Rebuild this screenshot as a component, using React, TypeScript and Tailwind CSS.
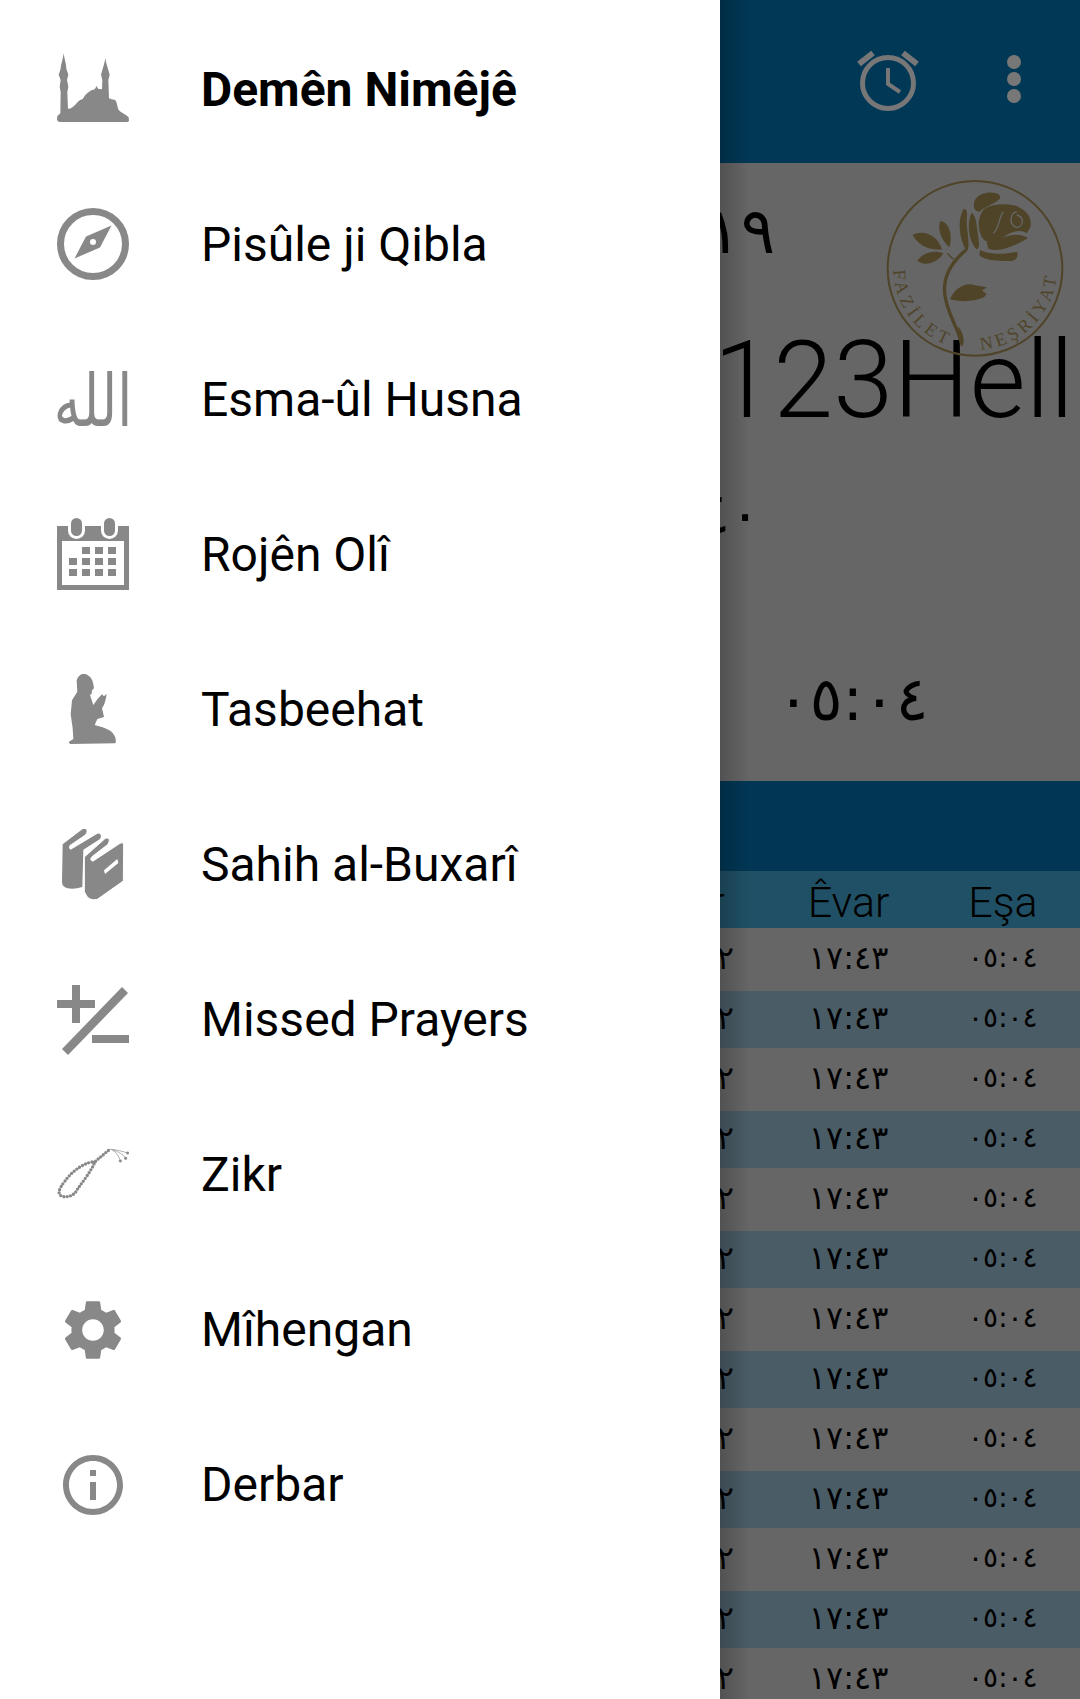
import { MdInfoOutline, MdSettings } from "react-icons/md";

const GRAY = "#888888";

function MosqueIcon() {
  return (
    <svg viewBox="81 72 216 216" className="w-[72px] h-[72px] overflow-visible" fill={GRAY}>
      <path d="M101 70 C104 92 109 102 109 116 L115 134 L111 150 L115 170 L112 186 L114 236 C120 238 128 232 138 222 C144 214 150 210 158 207 C166 192 178 182 194 178 L200 168 L204 176 L216 178 L217 150 L213 134 L217 120 C220 110 224 98 226 85 C228 98 232 110 235 120 L239 134 L235 150 L237 205 L245 208 L256 210 C262 220 262 232 266 240 C276 250 290 254 296 262 L297 272 Q296 276 290 276 L88 276 Q82 276 81 268 L82 258 L91 250 L92 186 L89 170 L92 150 L86 134 L92 116 C93 102 98 92 101 70 Z" />
    </svg>
  );
}

function CompassIcon() {
  return (
    <svg viewBox="0 1 72 72" className="w-[72px] h-[72px] overflow-visible">
      <circle cx="36" cy="36" r="32.5" fill="none" stroke={GRAY} strokeWidth="7" />
      <path d="M54.5 17.5 L43 39.5 L17.5 50.5 L29 28.5 Z" fill={GRAY} />
      <circle cx="36" cy="34" r="3" fill="#ffffff" />
    </svg>
  );
}

function CalendarIcon() {
  const cells = [
    [25, 25], [38, 25], [51, 25],
    [12, 36], [25, 36], [38, 36], [51, 36],
    [12, 47], [25, 47], [38, 47], [51, 47],
  ];
  return (
    <svg viewBox="0 2 72 72" className="w-[72px] h-[72px] overflow-visible">
      <rect x="0" y="9" width="72" height="64" fill={GRAY} />
      <rect x="5" y="24" width="62" height="44" fill="#ffffff" />
      <rect x="11" y="0" width="17" height="22" rx="8.5" fill="#ffffff" />
      <rect x="44" y="0" width="17" height="22" rx="8.5" fill="#ffffff" />
      <rect x="14" y="1" width="11" height="18" rx="5.5" fill={GRAY} />
      <rect x="47" y="1" width="11" height="18" rx="5.5" fill={GRAY} />
      {cells.map(([x, y]) => (
        <rect key={`${x}-${y}`} x={x} y={y + 5} width="8" height="7" fill={GRAY} />
      ))}
    </svg>
  );
}

function PrayerIcon() {
  return (
    <svg viewBox="51 69 216 216" className="w-[72px] h-[72px]" fill={GRAY}>
      <path d="M130 68 C146 70 158 82 160 100 L162 112 L156 118 L155 128 L150 132 L160 162 L172 145 L186 130 L192 136 L200 128 C198 145 194 160 186 172 L192 198 L172 204 L164 222 C185 228 208 234 218 246 C226 256 230 268 226 277 L90 279 L86 273 L100 264 L98 232 L92 190 L96 148 L112 122 L110 88 C114 76 120 70 130 68 Z" />
    </svg>
  );
}

function BooksIcon() {
  return (
    <svg viewBox="51 534 216 216" className="w-[72px] h-[72px]">
      <path
        d="M68 580 L128 534 Q138 530 140 540 Q140 548 134 552 L90 582 Q83 590 92 596 L172 548 Q182 546 183 556 L180 564 L130 596 L127 708 Q100 716 80 711 Q66 706 66 692 Z"
        fill={GRAY}
      />
      <path
        d="M133 618 L196 562 Q208 558 208 570 L204 580 L155 618 Q148 626 158 631 L240 577 Q250 572 251 582 L250 690 L172 745 Q150 750 140 735 L133 722 Z"
        fill={GRAY}
        stroke="#ffffff"
        strokeWidth="3"
      />
      <path d="M192 658 L232 624 L235 636 L195 669 Z" fill="#ffffff" />
    </svg>
  );
}

function PlusMinusIcon() {
  return (
    <svg viewBox="0 0 72 72" className="w-[72px] h-[72px]" fill={GRAY}>
      <path d="M15 1 H23 V16 H38 V24 H23 V39 H15 V24 H0 V16 H15 Z" />
      <path d="M65 3 L71 9 L11 71 L5 65 Z" />
      <rect x="35" y="51" width="37" height="8" />
    </svg>
  );
}

function BeadsIcon() {
  return (
    <svg viewBox="51 24 216 216" className="w-[72px] h-[72px]" fill="none" stroke={GRAY}>
      <path
        d="M165 92 C140 92 100 115 75 150 C55 175 50 192 70 197 C90 199 105 190 112 175 C130 150 155 118 165 92 L208 56"
        strokeWidth="10"
        strokeLinecap="round"
        strokeDasharray="0 10"
      />
      <path d="M208 55 C225 55 245 60 263 66 M215 56 C235 62 250 70 257 82 M218 58 C230 65 238 78 241 90" strokeWidth="2" />
      <circle cx="263" cy="66" r="4" fill={GRAY} />
      <circle cx="257" cy="82" r="4" fill={GRAY} />
      <circle cx="241" cy="90" r="4" fill={GRAY} />
    </svg>
  );
}

function AllahIcon() {
  return (
    <span dir="rtl" className="w-[72px] h-[72px] flex items-center justify-center whitespace-nowrap scale-y-[1.35] translate-y-[2px] font-['DejaVu_Sans',sans-serif] text-[54px] leading-none text-[#888888]">
      الله
    </span>
  );
}

function RoseLogo() {
  const c = "#4f4428";
  return (
    <svg viewBox="0 0 660 600" className="absolute left-[860px] top-[170px] w-[220px] h-[200px]">
      <circle cx="345" cy="295" r="262" fill="none" stroke={c} strokeWidth="6" />
      <path d="M158 195 C190 178 232 195 246 238 C205 242 175 225 158 195 Z" fill={c} />
      <path d="M240 154 C258 150 282 185 268 232 C245 212 232 180 240 154 Z" fill={c} />
      <path d="M172 272 C190 246 225 240 250 250 C235 276 195 292 172 272 Z" fill={c} />
      <path d="M262 250 L280 268" stroke={c} strokeWidth="4" />
      <path d="M318 240 C270 280 242 330 258 392 C268 440 296 480 305 522" fill="none" stroke={c} strokeWidth="10" />
      <path d="M296 470 C310 490 316 515 306 530 C296 520 292 490 296 470 Z" fill={c} />
      <path d="M270 388 C285 352 320 335 345 346 L380 352 L366 362 L380 372 L372 382 C340 396 300 396 270 388 Z" fill={c} />
      <path d="M312 116 C295 140 292 195 320 244 C332 238 322 190 320 160 C320 140 326 120 312 116 Z" fill={c} />
      <path d="M335 128 C318 165 328 215 350 238 C362 235 356 215 352 180 C350 160 346 135 335 128 Z" fill={c} />
      <path d="M345 90 C360 64 410 62 420 78 C426 95 380 105 358 125 C345 125 336 110 345 90 Z" fill={c} />
      <path d="M375 115 C400 100 440 100 470 108 C495 120 516 135 512 170 L500 190 C480 176 450 185 425 205 C400 216 380 225 365 200 C350 170 355 135 375 115 Z" fill={c} />
      <path d="M380 216 C420 212 460 178 504 204 C470 225 420 250 385 236 Z" fill={c} />
      <path d="M360 240 C390 256 440 252 470 245 C478 256 470 276 445 273 C410 273 370 270 358 255 Z" fill={c} />
      <path d="M430 125 C415 145 420 170 400 190 M470 125 C450 130 445 165 470 172 C490 172 495 140 470 135" fill="none" stroke="#666666" strokeWidth="4" />
      <path id="rose-arc" d="M100 295 A245 245 0 0 0 590 295" fill="none" />
      <text fill={c} className="font-['Liberation_Serif',serif] text-[54px]">
        <textPath href="#rose-arc" startOffset="5" textLength="290">FAZİLET</textPath>
      </text>
      <text fill={c} className="font-['Liberation_Serif',serif] text-[54px]">
        <textPath href="#rose-arc" startOffset="402" textLength="340">NEŞRİYAT</textPath>
      </text>
    </svg>
  );
}

function AlarmIcon() {
  return (
    <svg viewBox="0 0 64 64" className="w-16 h-16" fill="none" stroke="#777777">
      <circle cx="32" cy="35" r="25.5" strokeWidth="5" />
      <path d="M32 20 V36 L44 44" strokeWidth="4" />
      <path d="M3 16 L17 5 M61 16 L47 5" strokeWidth="6" />
    </svg>
  );
}

const menu = [
  { label: "Demên Nimêjê", icon: <MosqueIcon />, active: true },
  { label: "Pisûle ji Qibla", icon: <CompassIcon /> },
  { label: "Esma-ûl Husna", icon: <AllahIcon /> },
  { label: "Rojên Olî", icon: <CalendarIcon /> },
  { label: "Tasbeehat", icon: <PrayerIcon /> },
  { label: "Sahih al-Buxarî", icon: <BooksIcon /> },
  { label: "Missed Prayers", icon: <PlusMinusIcon /> },
  { label: "Zikr", icon: <BeadsIcon /> },
  { label: "Mîhengan", icon: <MdSettings size={72} color={GRAY} /> },
  { label: "Derbar", icon: <MdInfoOutline size={72} color={GRAY} /> },
];

const rows = Array.from({ length: 13 }, (_, i) => i);

function Drawer() {
  return (
    <aside className="absolute left-0 top-0 bottom-0 w-[720px] bg-white pt-[12px]">
      {menu.map((item) => (
        <div key={item.label} className="h-[155px] flex items-center pl-[57px]">
          <div className="w-[72px] h-[72px] flex items-center justify-center shrink-0">{item.icon}</div>
          <span className={`ml-[72px] text-[48px] leading-none text-black ${item.active ? "font-bold" : "font-normal"}`}>
            {item.label}
          </span>
        </div>
      ))}
    </aside>
  );
}

export default function App() {
  return (
    <div className="relative w-[1080px] h-[1699px] overflow-hidden bg-[#666666] font-['Roboto',sans-serif]">
      <header className="h-[163px] bg-[#003856] flex items-center justify-end">
        <div className="mr-[87px] mb-[3px]"><AlarmIcon /></div>
        <div className="mr-[59px] mb-[6px] flex flex-col gap-[3px]">
          <span className="w-[14px] h-[14px] rounded-full bg-[#777777]" />
          <span className="w-[14px] h-[14px] rounded-full bg-[#777777]" />
          <span className="w-[14px] h-[14px] rounded-full bg-[#777777]" />
        </div>
      </header>

      <section className="h-[618px] font-['DejaVu_Sans',sans-serif] text-black">
        <div className="pt-[36px] w-[775px] h-[150px] text-right text-[64px] tracking-[-12px] leading-none">١٠/٠٣/٢٠١٩</div>
        <div className="h-[135px] pr-[6px] text-right whitespace-nowrap font-['Roboto',sans-serif] font-light text-[108px] leading-[135px]">123Hell</div>
        <div className="w-[760px] pt-[38px] h-[220px] text-right text-[56px] leading-none">١٢/٤٠</div>
        <div className="pl-[777px] text-[61px] leading-none">٠٥:٠٤</div>
      </section>
      <RoseLogo />

      <div className="h-[90px] bg-[#013755]" />
      <div className="h-[57px] grid grid-cols-7 bg-[#205065] text-center font-light text-[43px] leading-[62px] text-black">
        <span className="col-start-5">Esr</span>
        <span>Êvar</span>
        <span>Eşa</span>
      </div>
      {rows.map((i) => (
        <div key={i} className={`mt-[3px] h-[57px] grid grid-cols-7 text-center font-['DejaVu_Sans',sans-serif] text-[32px] leading-[54px] text-black ${i % 2 === 0 ? "bg-[#666666]" : "bg-[#4a5c66]"}`}>
          <span className="col-start-5">١٤:٤٢</span>
          <span>١٧:٤٣</span>
          <span className="text-[28px]">٠٥:٠٤</span>
        </div>
      ))}

      <div className="absolute left-[720px] top-0 bottom-0 w-[30px] bg-gradient-to-r from-black/20 to-transparent" />
      <Drawer />
    </div>
  );
}
